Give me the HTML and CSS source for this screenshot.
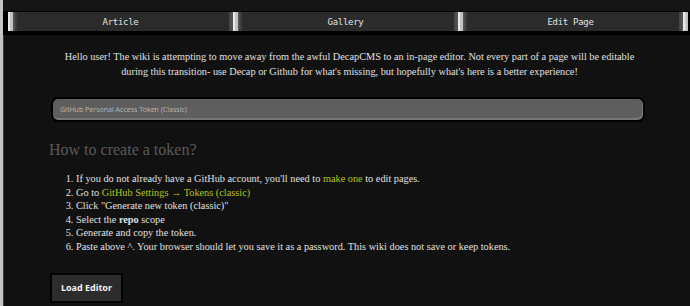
FILE: index.html
```html
<!DOCTYPE html>
<html>
<head>
<meta charset="utf-8">
<link rel="stylesheet" href="styles.css">
</head>
<body>
<div class="frame">
  <div class="topbar"></div>
  <nav class="tabs">
    <a class="tab">Article</a>
    <a class="tab">Gallery</a>
    <a class="tab">Edit Page</a>
  </nav>
  <main class="main">
    <p class="intro">Hello user! The wiki is attempting to move away from the awful DecapCMS to an in-page editor. Not every part of a page will be editable during this transition- use Decap or Github for what's missing, but hopefully what's here is a better experience!</p>
    <input class="token" type="password" placeholder="GitHub Personal Access Token (Classic)">
    <h2 class="howto">How to create a token?</h2>
    <ol class="steps">
      <li>If you do not already have a GitHub account, you'll need to <a class="link">make one</a> to edit pages.</li>
      <li>Go to <a class="link">GitHub Settings → Tokens (classic)</a></li>
      <li>Click "Generate new token (classic)"</li>
      <li>Select the <b>repo</b> scope</li>
      <li>Generate and copy the token.</li>
      <li>Paste above ^. Your browser should let you save it as a password. This wiki does not save or keep tokens.</li>
    </ol>
    <button class="load">Load Editor</button>
  </main>
</div>
</body>
</html>
```
FILE: styles.css
```css
html, body {
  margin: 0;
  padding: 0;
  background: #111111;
  height: 100%;
  overflow: hidden;
}
.frame {
  border-left: 3px solid #c4c4c4;
  box-shadow: inset 1px 0 0 #3c3c3c;
  min-height: 306px;
  box-sizing: border-box;
  background: #111111;
}
.topbar {
  height: 11px;
  background: #151515;
  border-bottom: 1px solid #000;
}
.tabs {
  display: flex;
  background: #000;
  padding: 0 2px 4px 5px;
}
.tabs::after {
  content: "";
  width: 5px;
  background: linear-gradient(to right, #e6e6e6 0, #e6e6e6 2px, #bdbdbd 3px, #bdbdbd 5px);
}
.tab {
  flex: 1;
  height: 19px;
  display: flex;
  align-items: center;
  justify-content: center;
  font-family: "DejaVu Sans Mono", monospace;
  font-size: 9px;
  letter-spacing: -0.3px;
  color: #e2e2e2;
  background: linear-gradient(to right,
    #e8e8e8 0, #e8e8e8 2px, #c2c2c2 2px, #c2c2c2 5px,
    #5a5a5a 5px, #3a3a3a 8px, #2b2b2b 10px,
    #2b2b2b calc(100% - 4px), #444 calc(100% - 4px), #555 100%);
}
.main {
  padding: 0 42px 0 48px;
  color: #e0e0e0;
  font-family: "Liberation Serif", serif;
}
.intro {
  margin: 0;
  padding-top: 15px;
  text-align: center;
  font-size: 10.3px;
  line-height: 14.5px;
}
.token {
  display: block;
  box-sizing: border-box;
  width: 594px;
  height: 25px;
  margin-top: 18px;
  border: 2px solid #000;
  border-radius: 7px;
  background: #5e5e5e;
  box-shadow: inset -1px -2px 0 #777;
  padding: 0 7px;
  font-family: "Noto Sans", sans-serif;
  font-size: 7px;
  color: #ccc;
  outline: none;
}
.token::placeholder {
  color: #b4b4b4;
}
.howto {
  margin: 18px 0 0 -2px;
  font-size: 16px;
  font-weight: normal;
  line-height: 20px;
  color: #5a5a5a;
}
.steps {
  margin: 12px 0 0 0;
  padding-left: 25px;
  font-size: 10.3px;
  line-height: 13.6px;
}
.steps b {
  font-weight: bold;
}
.link {
  color: #aec41a;
}
.load {
  display: block;
  margin: 19px 0 0 -1px;
  width: 73px;
  height: 30px;
  border: 2px solid #000;
  background: #2c2c2c;
  color: #f2f2f2;
  font-family: "Noto Sans", sans-serif;
  font-weight: bold;
  font-size: 9px;
  padding: 0;
}
```
